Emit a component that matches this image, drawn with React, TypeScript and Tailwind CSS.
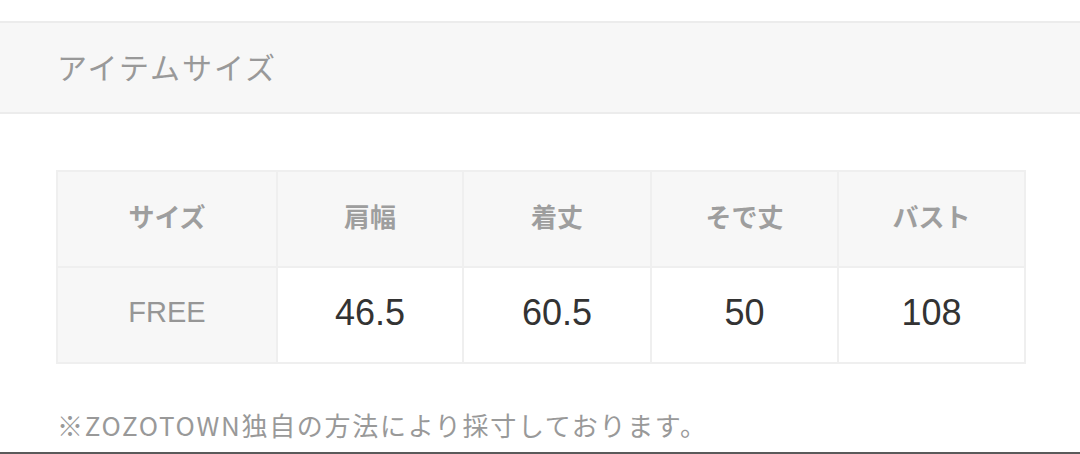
const font = { fontFamily: '"Liberation Sans", "Noto Sans CJK JP", sans-serif' }
const jp = { fontFamily: '"Noto Sans CJK JP", sans-serif' }

const headers = ['サイズ', '肩幅', '着丈', 'そで丈', 'バスト']
const values = ['46.5', '60.5', '50', '108']

export default function App() {
    return (
        <div className="flex flex-col w-[1080px] h-[454px] bg-white overflow-hidden" style={font}>
            {/* Section title */}
            <div className="mt-[21px] h-[93px] flex items-center px-[57px] bg-[#f7f7f7] border-y-2 border-[#ececec]">
                <h2 className="text-[30px] text-[#999999] tracking-[2px] pb-[2px]" style={jp}>
                    アイテムサイズ
                </h2>
            </div>

            {/* Size table */}
            <div className="mt-[56px] mx-[56px]">
                <table className="w-[968px] border-collapse border-2 border-[#efefef] table-fixed">
                    <colgroup>
                        <col className="w-[220px]" />
                        <col className="w-[186px]" />
                        <col className="w-[188px]" />
                        <col className="w-[187px]" />
                        <col className="w-[187px]" />
                    </colgroup>
                    <thead>
                        <tr className="h-[96px] bg-[#f7f7f7]">
                            {headers.map((h) => (
                                <th
                                    key={h}
                                    className="border-2 border-[#efefef] pb-[7px] text-[26px] font-bold text-[#9e9e9e] text-center"
                                    style={jp}
                                >
                                    {h}
                                </th>
                            ))}
                        </tr>
                    </thead>
                    <tbody>
                        <tr className="h-[96px]">
                            <td className="border-2 border-[#efefef] bg-[#f7f7f7] pb-[4px] text-center text-[29px] text-[#969696]">FREE</td>
                            {values.map((v) => (
                                <td key={v} className="border-2 border-[#efefef] pb-[5px] text-center text-[36px] text-[#333333]">
                                    {v}
                                </td>
                            ))}
                        </tr>
                    </tbody>
                </table>
            </div>

            {/* Note */}
            <p className="mt-[48px] px-[57px] text-[26px] text-[#999999] leading-none tracking-[1.7px]" style={jp}>
                ※ZOZOTOWN独自の方法により採寸しております。
            </p>

            <div className="flex-1" />
            <div className="h-[2px] bg-[#5a5a5a]" />
        </div>
    )
}
